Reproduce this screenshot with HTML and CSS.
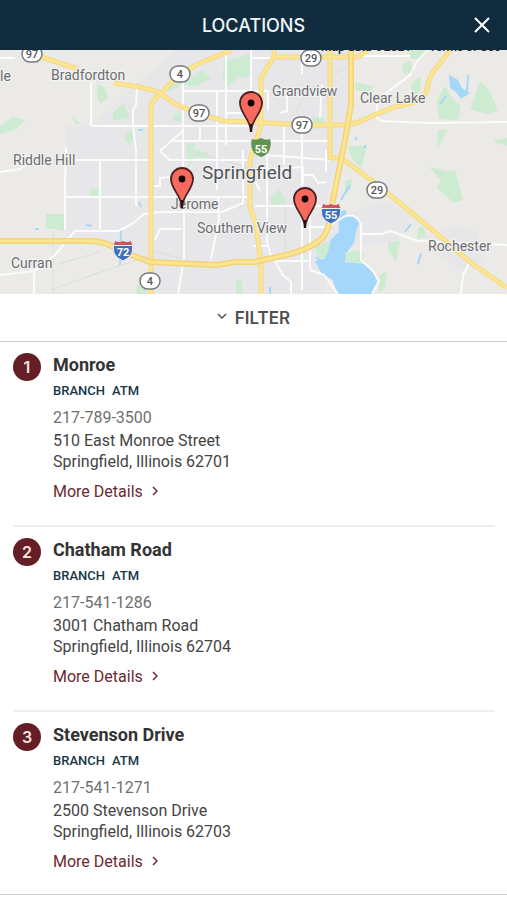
FILE: index.html
```html
<!DOCTYPE html>
<html lang="en">
<head>
    <meta charset="UTF-8">
    <meta name="viewport" content="width=device-width, initial-scale=1.0">
    <title>Locations</title>
    <link rel="stylesheet" href="styles.css">
</head>
<body>

<header class="header">
    <h1>LOCATIONS</h1>
    <button type="button" class="close" aria-label="Close">
        <svg width="18" height="18" viewBox="0 0 18 18"><path d="M2 2 L16 16 M16 2 L2 16"/></svg>
    </button>
</header>

<main>
    <svg class="map" viewBox="0 50 507 244" role="img" aria-label="Map of branches in Springfield">
        <defs>
            <g id="pin">
                <path d="M0 0 C-1 -12 -11 -18 -11 -28 A11 11 0 0 1 11 -28 C11 -18 1 -12 0 0 Z" fill="#f8695f" stroke="#4a2220" stroke-width="1.8" stroke-linejoin="round"/>
                <path d="M0 1 V-7" stroke="#2a1010" stroke-width="2.4"/>
                <circle cy="-28" r="3.4" fill="#100"/>
            </g>
            <g id="oval">
                <rect x="-10" y="-8" width="20" height="16" rx="8" fill="#fff" stroke="#77797b" stroke-width="1.5"/>
            </g>
            <g id="interstate">
                <path d="M-8 -10 Q-4 -8 0 -10 Q4 -8 8 -10 Q11 -4 9 2 Q7 7 0 10 Q-7 7 -9 2 Q-11 -4 -8 -10 Z" fill="#3f70b9" stroke="#eef2f8" stroke-width="1"/>
                <path d="M-8 -10 Q-4 -8 0 -10 Q4 -8 8 -10 L9 -6 H-9 Z" fill="#d0555a"/>
                <path d="M-9 -5.5 H9" stroke="#eef2f8" stroke-width="1"/>
            </g>
        </defs>
        <rect class="land" y="50" width="507" height="244"/>

        <!-- built-up areas -->
        <path class="town" d="M92 126 L130 90 L176 50 H350 L348 125 L340 165 L325 200 L345 215 L385 200 L410 215 L400 240 L330 250 L325 294 H158 L150 264 L105 246 L66 235 V126 Z"/>
        <path class="town" d="M425 236 L455 225 L478 233 L482 262 L462 271 L438 255 Z"/>

        <!-- parks -->
        <g class="park">
            <path d="M97 84 L105 87 L108 98 L101 104 L97 98 Z"/>
            <path d="M114 111 L124 104 L130 119 L113 120 Z"/>
            <path d="M0 126 L12 117 L25 120 L17 129 L0 134 Z"/>
            <path d="M72 116 L80 123 L76 125 Z"/>
            <path d="M126 133 L136 128 L131 144 L125 141 Z"/>
            <path d="M46 214 H65 V231 L55 229 H46 Z"/>
            <path d="M91 188 H99 V196 H91 Z"/>
            <path d="M166 86 L186 81 L203 70 L211 78 L196 87 L182 84 L170 92 Z"/>
            <path d="M224 61 L240 57 L251 53 V77 H238 L228 87 L223 79 Z"/>
            <path d="M173 116 L181 112 V122 L174 121 Z"/>
            <path d="M186 143 H195 V149 L208 153 V158 L196 157 L188 168 Z"/>
            <path d="M270 197 L280 189 L286 203 L272 208 Z"/>
            <path d="M236 280 H242 V294 H236 Z"/>
            <path d="M137 286 L145 282 L147 294 H136 Z"/>
            <path d="M402 64 L411 61 L413 73 L404 74 Z"/>
            <path d="M409 50 H427 L419 61 L410 57 Z"/>
            <path d="M412 83 L421 76 L420 92 L411 97 Z"/>
            <path d="M355 82 L373 86 L371 91 L356 91 Z"/>
            <path d="M437 100 L445 86 L451 96 L461 107 L458 120 L439 119 Z"/>
            <path d="M470 109 L480 81 L490 92 L498 111 L486 114 Z"/>
            <path d="M438 130 L448 129 L442 141 L437 149 Z"/>
            <path d="M493 140 L507 138 V146 L496 143 Z"/>
            <path d="M348 146 H367 L361 169 L351 157 Z"/>
            <path d="M345 181 L352 179 L351 187 L345 196 Z"/>
            <path d="M429 167 L447 171 L455 170 L463 200 L454 203 L437 188 L441 180 Z"/>
            <path d="M388 242 L400 241 L396 262 L389 252 Z"/>
            <path d="M418 228 L423 226 L426 237 L417 239 Z"/>
            <path d="M315 246 L331 241 L329 256 L318 259 Z"/>
            <path d="M380 275 L387 272 L385 288 L378 294 Z"/>
            <path d="M312 117 L322 116 L326 126 L316 130 Z"/>
        </g>

        <!-- lake and ponds -->
        <path class="water" d="M338 212 L346 210 L347 217 L353 216 L360 222 L357 228 L354 243 L347 252 L345 262 L366 264 L374 274 L378 283 L372 294 H337 L333 280 L322 274 L315 261 L324 259 L328 252 L331 239 L339 232 Z"/>
        <path class="park" d="M345 253 L358 250 L364 254 L362 264 L346 261 Z"/>
        <path class="water" d="M449 75 L458 80 L462 88 L470 93 L461 99 L456 92 L450 88 Z"/>
        <path class="stream" d="M467 91 L468 75 M440 104 L446 96 M405 232 L411 224 M316 257 L325 264 L319 269 M341 200 L350 185 M120 266 L121 230 M139 202 L141 207 M138 130 L143 130 M86 225 L92 226 M35 229 L39 229 M418 264 L421 253 M270 287 V294 M355 137 L357 140 M365 145 V148"/>

        <!-- rail lines -->
        <path class="rail" d="M53 231 V294 M50 290 L150 255 M58 264 L100 252 M247 150 L240 210 M292 116 L310 90 L350 65 M150 250 L200 264 M285 206 V262 M187 150 L250 168"/>

        <!-- local roads -->
        <path class="road" d="M91 82 V126 M66 148 L65 186 V230 M91 126 H250 M137 87 L136 105 L133 110 V126 L136 150 V206 M100 160 V229 M70 160 H150 M66 197 H250 M75 231 H118 L132 224 L144 214 L160 212 H222 L243 203 V150"/>
        <path class="road" d="M75 231 L55 255 L34 271 L0 275 M34 271 V294 M0 172 L20 169 L30 162"/>
        <path class="road" d="M226 50 V145 M183 79 V205 M217 90 V190 M200 125 V142 M184 91 H250 M160 151 L184 130 M160 151 L170 160 H250 M172 141 H250 M154 186 H160 V178 L180 176 M155 240 L160 229 L182 229 M184 205 V258 L178 294 M218 197 L219 220 L211 259 M250 170 L260 191 M251 50 V132 M251 58 H274 M226 113 H250"/>
        <path class="road" d="M302 50 V74 M253 91 H268 V111 M280 91 H287 V111 L280 113 M322 84 L320 118 M262 141 H328 M284 125 V165 M302 128 V290 M265 155 L330 160 M266 170 L303 167 V190 M303 175 H313 L318 183 L326 182 M255 206 H330 M267 155 V242 L270 253 L283 275 L291 282 V294 M253 246 H268 M304 227 H328 L345 216 Q356 213 361 224 V260 L373 271 L379 281 L372 294 M310 207 V270 L324 275 L338 294 M273 261 H310 M326 150 V172"/>
        <path class="road" d="M362 234 H382 L390 231 L404 236 L418 241 L507 245 M470 262 L463 275 L461 294 M377 100 V118 L382 121 L430 123 L507 122 M385 94 L410 75 L418 60 L428 50 M0 58 H15 M330 56 H410"/>

        <!-- highways: casing first, then the fill -->
        <path class="casing" d="M32 54 L78 69 M114 83 L140 87 L158 92 L175 104 L199 114 L225 121 L253 122 L302 125 H345 Q357 124 372 116 L394 107 Q422 103 427 90 Q428 77 437 67 L450 50 M232 50 L198 64 L180 74 L153 101 L151 106 V294 M274 50 V57 L261 78 V125 L250 160 V207 L256 225 L261 265 V294 M274 57 H358 L368 50 M330 50 V158 H341 L378 185 L430 228 L470 262 L507 288"/>
        <path class="fill" d="M32 54 L78 69 M114 83 L140 87 L158 92 L175 104 L199 114 L225 121 L253 122 L302 125 H345 Q357 124 372 116 L394 107 Q422 103 427 90 Q428 77 437 67 L450 50 M232 50 L198 64 L180 74 L153 101 L151 106 V294 M274 50 V57 L261 78 V125 L250 160 V207 L256 225 L261 265 V294 M274 57 H358 L368 50 M330 50 V158 H341 L378 185 L430 228 L470 262 L507 288"/>
        <path class="casing wide" d="M0 241 H93 Q107 242 121 251 L150 262 L216 265 L235 262 H255 L290 254 Q315 247 324 236 Q330 227 331 210 L345 140 L351 105 V50"/>
        <path class="fill wide" d="M0 241 H93 Q107 242 121 251 L150 262 L216 265 L235 262 H255 L290 254 Q315 247 324 236 Q330 227 331 210 L345 140 L351 105 V50"/>

        <g class="place">
            <text x="0" y="81">le</text>
            <text x="51" y="80">Bradfordton</text>
            <text x="272" y="96">Grandview</text>
            <text x="360" y="103">Clear Lake</text>
            <text x="13" y="165">Riddle Hill</text>
            <text x="171" y="209">Jerome</text>
            <text x="197" y="233">Southern View</text>
            <text x="428" y="251">Rochester</text>
            <text x="11" y="268">Curran</text>
            <text class="city" x="202" y="179">Springfield</text>
        </g>

        <g class="shield">
            <use href="#oval" x="32" y="54"/><text x="32" y="58">97</text>
            <use href="#oval" x="180" y="74"/><text x="180" y="78">4</text>
            <use href="#oval" x="199" y="113"/><text x="199" y="117">97</text>
            <use href="#oval" x="311" y="58"/><text x="311" y="62">29</text>
            <use href="#oval" x="302" y="125"/><text x="302" y="129">97</text>
            <use href="#oval" x="377" y="190"/><text x="377" y="194">29</text>
            <use href="#oval" x="150" y="281"/><text x="150" y="285">4</text>
        </g>
        <g class="shield light">
            <path d="M252 139 Q256 141 261 138 Q266 141 270 139 Q272 145 269 151 Q267 155 261 157 Q255 155 253 151 Q250 145 252 139 Z" fill="#5d9550"/>
            <text x="261" y="153">55</text>
            <use href="#interstate" x="123" y="251"/><text x="123" y="256">72</text>
            <use href="#interstate" x="331" y="214"/><text x="331" y="219">55</text>
        </g>

        <use href="#pin" x="251" y="131"/>
        <use href="#pin" x="182" y="207"/>
        <use href="#pin" x="305" y="227"/>

        <g class="credit">
            <text x="321" y="51">Map data ©2021</text>
            <text x="429" y="51">Terms of Use</text>
        </g>
    </svg>

    <button type="button" class="filter">
        <svg width="10" height="8" viewBox="0 0 10 8"><path d="M1 1 L5 5 L9 1"/></svg>
        FILTER
    </button>

    <ol class="locations">
        <li class="location">
            <span class="number">1</span>
            <div class="details">
                <h2>Monroe</h2>
                <p class="type"><span>BRANCH</span> <span>ATM</span></p>
                <a class="phone" href="tel:2177893500">217-789-3500</a>
                <address>510 East Monroe Street<br>Springfield, Illinois 62701</address>
                <a class="more" href="#monroe">More Details <svg width="6" height="10" viewBox="0 0 6 10"><path d="M1 1 L5 5 L1 9"/></svg></a>
            </div>
        </li>
        <li class="location">
            <span class="number">2</span>
            <div class="details">
                <h2>Chatham Road</h2>
                <p class="type"><span>BRANCH</span> <span>ATM</span></p>
                <a class="phone" href="tel:2175411286">217-541-1286</a>
                <address>3001 Chatham Road<br>Springfield, Illinois 62704</address>
                <a class="more" href="#chatham">More Details <svg width="6" height="10" viewBox="0 0 6 10"><path d="M1 1 L5 5 L1 9"/></svg></a>
            </div>
        </li>
        <li class="location">
            <span class="number">3</span>
            <div class="details">
                <h2>Stevenson Drive</h2>
                <p class="type"><span>BRANCH</span> <span>ATM</span></p>
                <a class="phone" href="tel:2175411271">217-541-1271</a>
                <address>2500 Stevenson Drive<br>Springfield, Illinois 62703</address>
                <a class="more" href="#stevenson">More Details <svg width="6" height="10" viewBox="0 0 6 10"><path d="M1 1 L5 5 L1 9"/></svg></a>
            </div>
        </li>
    </ol>
</main>

</body>
</html>
```

FILE: styles.css
```css
* {
    box-sizing: border-box;
}
body {
    margin: 0;
    font-family: Roboto, Arial, sans-serif;
    font-size: 16px;
    color: #444;
    background: #fff;
}
h1, h2, p {
    margin: 0;
}
button {
    border: none;
    padding: 0;
    background: none;
    cursor: pointer;
}

/* Header */
.header {
    display: grid;
    grid-template-columns: 1fr auto 1fr;
    align-items: center;
    height: 50px;
    padding: 0 16px;
    background: #112c3e;
    color: #f0f6fa;
}
.header h1 {
    grid-column: 2;
    font-family: Inter, sans-serif;
    font-size: 18px;
    font-weight: 500;
}
.close {
    display: flex;
    justify-self: end;
}
.close path {
    fill: none;
    stroke: #fff;
    stroke-width: 2;
}

/* Map */
.map {
    display: block;
    width: 100%;
}
.land {
    fill: #ebeae7;
}
.town {
    fill: #e7e6e9;
}
.park {
    fill: #cdebd0;
}
.water {
    fill: #a5d7fb;
}
.stream {
    fill: none;
    stroke: #a5d7fb;
    stroke-width: 2;
}
.rail {
    fill: none;
    stroke: #dcdcdc;
    stroke-width: 1;
}
.road {
    fill: none;
    stroke: #fbfbfc;
    stroke-width: 2;
    stroke-linejoin: round;
}
.casing {
    fill: none;
    stroke: #f3d98a;
    stroke-width: 5;
    stroke-linejoin: round;
}
.fill {
    fill: none;
    stroke: #fce590;
    stroke-width: 3;
    stroke-linejoin: round;
}
.casing.wide {
    stroke: #f3d377;
    stroke-width: 6;
}
.place text {
    font-size: 14px;
    fill: #6b6d70;
    stroke: #f4f4f4;
    stroke-width: 2;
    paint-order: stroke;
}
.place .city {
    font-size: 19px;
    fill: #505356;
}
.shield text {
    font-size: 11px;
    font-weight: 500;
    fill: #555;
    text-anchor: middle;
}
.shield.light text {
    font-weight: 700;
    fill: #fff;
}
.credit text {
    font-size: 12px;
    font-weight: 500;
    fill: #222;
}

/* Filter bar */
.filter {
    display: flex;
    justify-content: center;
    align-items: center;
    gap: 8px;
    width: 100%;
    height: 48px;
    border-bottom: 1px solid #ccc;
    font-family: Inter, sans-serif;
    font-size: 17px;
    font-weight: 600;
    color: #505050;
}
.filter svg {
    margin-bottom: 2px;
}
.filter path,
.more path {
    fill: none;
    stroke: currentColor;
    stroke-width: 1.5;
}

/* Location list */
.locations {
    margin: 0;
    padding: 0;
    list-style: none;
    border-bottom: 1px solid #ccc;
}
.location {
    display: flex;
    align-items: flex-start;
    gap: 12px;
    margin: 0 12px 0 13px;
    padding: 11px 0 22px;
    border-bottom: 2px solid #eee;
}
.location:last-child {
    padding-bottom: 21px;
    border-bottom: none;
}
.number {
    display: flex;
    justify-content: center;
    align-items: center;
    width: 28px;
    height: 28px;
    border-radius: 50%;
    background: #651e25;
    color: #f7e6e4;
    font-family: Inter, sans-serif;
    font-weight: 600;
}
.details {
    display: flex;
    flex-direction: column;
    align-items: flex-start;
}
.details h2 {
    font-size: 18px;
    line-height: 24px;
    color: #333;
}
.type {
    display: flex;
    gap: 7px;
    margin: 4px 0;
    font-size: 13px;
    font-weight: 500;
    line-height: 20px;
    color: #173746;
}
.phone {
    line-height: 25px;
    color: #707070;
    text-decoration: none;
}
address {
    line-height: 21px;
    font-style: normal;
}
.more {
    display: flex;
    align-items: center;
    gap: 9px;
    margin-top: 9px;
    line-height: 22px;
    color: #6c2a32;
    text-decoration: none;
}
.more svg {
    margin-bottom: 2px;
}
```
